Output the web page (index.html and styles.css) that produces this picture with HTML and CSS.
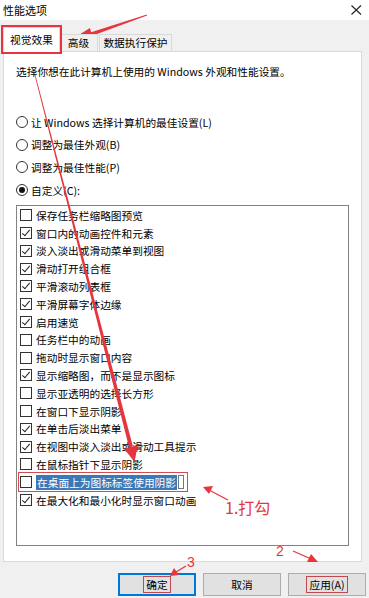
FILE: index.html
```html
<!DOCTYPE html>
<html lang="zh-CN">
<head>
<meta charset="utf-8">
<title>性能选项</title>
<link rel="stylesheet" href="styles.css">
</head>
<body>
<div class="window">
  <div class="titlebar">
    <span class="title">性能选项</span>
    <svg class="close" width="11" height="10" viewBox="0 0 11 10"><path d="M0.5 0.5 L10 9.5 M10 0.5 L0.5 9.5" stroke="#222" stroke-width="1.1" fill="none"/></svg>
  </div>
  <div class="tabs">
    <div class="tab active marked">视觉效果</div>
    <div class="tab t2">高级</div>
    <div class="tab t3">数据执行保护</div>
  </div>
  <div class="panel">
    <p class="desc">选择你想在此计算机上使用的 Windows 外观和性能设置。</p>
    <div class="radios">
      <div class="radio"><span class="dot"></span>让 Windows 选择计算机的最佳设置(L)</div>
      <div class="radio"><span class="dot"></span>调整为最佳外观(B)</div>
      <div class="radio"><span class="dot"></span>调整为最佳性能(P)</div>
      <div class="radio"><span class="dot on"></span>自定义(C):</div>
    </div>
    <div class="list">
      <div class="item"><span class="cb"></span>保存任务栏缩略图预览</div>
      <div class="item"><span class="cb on"></span>窗口内的动画控件和元素</div>
      <div class="item"><span class="cb on"></span>淡入淡出或滑动菜单到视图</div>
      <div class="item"><span class="cb on"></span>滑动打开组合框</div>
      <div class="item"><span class="cb on"></span>平滑滚动列表框</div>
      <div class="item"><span class="cb on"></span>平滑屏幕字体边缘</div>
      <div class="item"><span class="cb on"></span>启用速览</div>
      <div class="item"><span class="cb"></span>任务栏中的动画</div>
      <div class="item"><span class="cb"></span>拖动时显示窗口内容</div>
      <div class="item"><span class="cb on"></span>显示缩略图，而不是显示图标</div>
      <div class="item"><span class="cb"></span>显示亚透明的选择长方形</div>
      <div class="item"><span class="cb"></span>在窗口下显示阴影</div>
      <div class="item"><span class="cb on"></span>在单击后淡出菜单</div>
      <div class="item"><span class="cb on"></span>在视图中淡入淡出或滑动工具提示</div>
      <div class="item"><span class="cb"></span>在鼠标指针下显示阴影</div>
      <div class="item selected"><span class="cb"></span><span class="hl">在桌面上为图标标签使用阴影</span><span class="focus"></span></div>
      <div class="item"><span class="cb on"></span>在最大化和最小化时显示窗口动画</div>
    </div>
  </div>
  <div class="buttons">
    <button class="btn default"><span class="mark">确定</span></button>
    <button class="btn">取消</button>
    <button class="btn"><span class="mark">应用(A)</span></button>
  </div>

  <svg class="notes" width="369" height="598" viewBox="0 0 369 598">
    <g fill="#e5363d">
      <polygon points="147.1,15.4 146.9,14.6 85.6,34.0 86.8,37.8"/>
      <polygon points="69,41 90,28 93,40"/>
      <polygon points="34.6,75.1 35.4,74.9 132.9,446.5 129.1,447.5"/>
      <polygon points="124.2,448.7 137.8,445.2 134.5,462"/>
    </g>
    <g stroke="#e5363d" fill="none" stroke-width="1.3">
      <line x1="228" y1="500" x2="209" y2="490"/>
      <line x1="293" y1="551" x2="310" y2="558.5"/>
      <line x1="186" y1="566" x2="176" y2="572"/>
    </g>
    <g fill="#e5363d">
      <polygon points="203,487 213,486 209,494"/>
      <polygon points="318,562 307,562 311,554"/>
      <polygon points="170,576 174,568 179,575"/>
    </g>
    <text x="225" y="514" class="note-text">1.打勾</text>
    <text x="276" y="556" class="note-num">2</text>
    <text x="187" y="567" class="note-num">3</text>
  </svg>
</div>
</body>
</html>
```

FILE: styles.css
```css
* { box-sizing: border-box; }
html, body { margin: 0; padding: 0; }
body {
  width: 369px;
  height: 598px;
  overflow: hidden;
  background: #f0f0f0;
  font-family: "Noto Sans CJK SC", "Noto Sans", sans-serif;
  font-size: 10.7px;
  color: #000;
}
.window {
  position: relative;
  width: 369px;
  height: 598px;
}
.titlebar {
  height: 20px;
  background: #fff;
  display: flex;
  align-items: center;
  justify-content: space-between;
  padding: 0 7px 0 3px;
}
.title { font-size: 11px; line-height: 12px; }
.close { display: block; }
.tabs {
  display: flex;
  align-items: flex-end;
  height: 31px;
  padding-left: 3px;
  position: relative;
  z-index: 1;
}
.tab {
  height: 17px;
  border: 1px solid #d9d9d9;
  border-bottom: none;
  background: #f0f0f0;
  display: flex;
  align-items: center;
  justify-content: center;
  line-height: 14px;
}
.tab.active {
  height: 25px;
  width: 57px;
  background: #fff;
  margin-bottom: -1px;
  position: relative;
}
.tab.marked { outline: 2px solid #e5363d; outline-offset: 0px; }
.tab.t2 { width: 39px; margin-left: -1px; }
.tab.t3 { width: 73px; margin-left: 1px; }
.panel {
  margin: 0 7px 0 3px;
  height: 511px;
  background: #fff;
  border: 1px solid #d9d9d9;
  padding: 0 12px;
}
.desc {
  margin: 0;
  padding-top: 12px;
  line-height: 16px;
}
.radios { margin-top: 31px; }
.radio {
  height: 22.6px;
  display: flex;
  align-items: center;
}
.dot {
  width: 12px;
  height: 12px;
  border: 1px solid #333;
  border-radius: 50%;
  margin-right: 3px;
  display: flex;
  align-items: center;
  justify-content: center;
}
.dot.on::after {
  content: "";
  width: 6px;
  height: 6px;
  border-radius: 50%;
  background: #111;
}
.list {
  margin-top: 4px;
  width: 333px;
  height: 341px;
  border: 1px solid #828282;
  padding: 0 3px;
}
.item {
  height: 17.8px;
  display: flex;
  align-items: center;
}
.cb {
  width: 12px;
  height: 12px;
  border: 1px solid #333;
  margin-right: 4px;
  flex: none;
  position: relative;
}
.cb.on::after {
  content: "";
  position: absolute;
  left: 3px;
  top: 0px;
  width: 3px;
  height: 7px;
  border: solid #222;
  border-width: 0 1px 1px 0;
  transform: rotate(40deg);
}
.item.selected {
  width: 168px;
  margin-left: -1px;
  padding-left: 1px;
  outline: 1px solid #d24a52;
}
.hl {
  background: #3b78b8;
  color: #fff;
  padding: 0 1px;
  line-height: 15px;
}
.focus {
  width: 6px;
  height: 14px;
  border: 1px solid #777;
  margin-left: 1px;
}
.buttons {
  display: flex;
  justify-content: flex-end;
  gap: 7px;
  padding: 11px 3px 0 0;
}
.btn {
  width: 78px;
  height: 23px;
  background: #e1e1e1;
  border: 1px solid #adadad;
  font-family: inherit;
  font-size: 10.7px;
  color: #000;
  padding: 0;
  display: flex;
  align-items: center;
  justify-content: center;
}
.btn.default { border: 2px solid #0078d7; }
.mark {
  border: 1px solid #c0484f;
  padding: 1px 2px;
  line-height: 13px;
}
.notes {
  position: absolute;
  left: 0;
  top: 0;
  pointer-events: none;
}
.note-text {
  font-family: "Noto Sans CJK SC", sans-serif;
  font-size: 16px;
  fill: #e5363d;
}
.note-num {
  font-family: "Liberation Sans", sans-serif;
  font-size: 14px;
  fill: #e5363d;
}
```
